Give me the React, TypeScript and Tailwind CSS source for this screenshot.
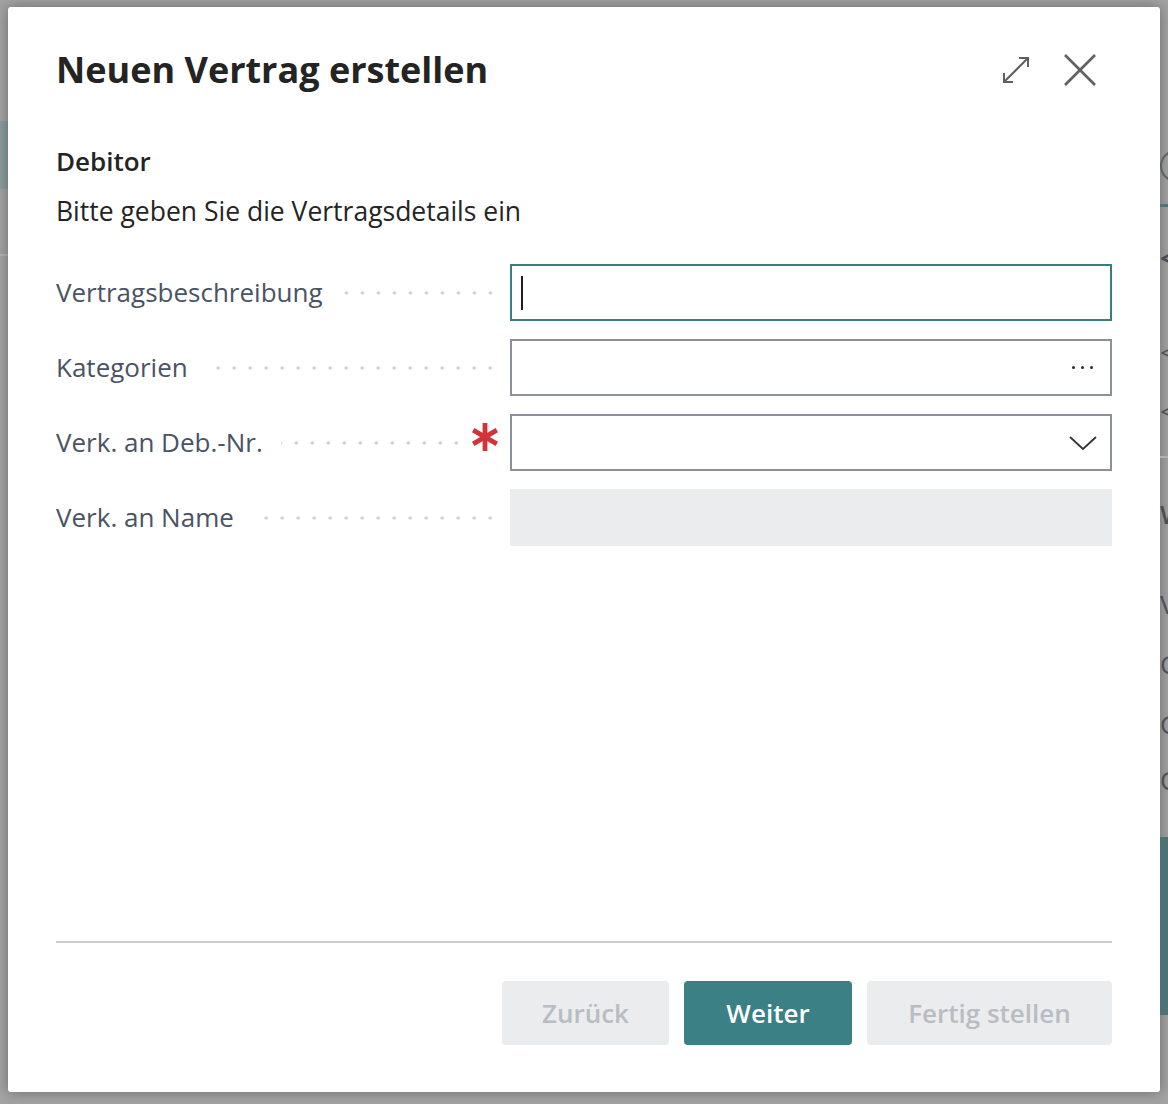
import React from "react";

// Dimmed page strip visible left of the dialog
const LeftStrip = () => (
  <div className="w-[8px] shrink-0 flex flex-col">
    <div className="h-[121px]" />
    <div className="h-[68px] bg-[#8a9d9d]" />
    <div className="h-[65px]" />
    <div className="h-[2px] bg-[#b4b4b4]" />
  </div>
);

// Dimmed page strip visible right of the dialog
const RightStrip = () => (
  <div className="w-[8px] shrink-0 flex flex-col overflow-hidden text-[#4b4f55] text-[26px] leading-none font-['Open_Sans',sans-serif]">
    <div className="h-[150px]" />
    <div className="h-[32px] w-[32px] rounded-full border-2 border-[#5b5f66]" />
    <div className="h-[22px]" />
    <div className="h-[3px] bg-[#4e7476]" />
    <div className="h-[38px]" />
    <div className="h-[26px] font-bold">&lt;</div>
    <div className="h-[68px]" />
    <div className="h-[26px]">&lt;</div>
    <div className="h-[33px]" />
    <div className="h-[26px]">&lt;</div>
    <div className="h-[32px]" />
    <div className="h-[2px] bg-[#b0b0b0]" />
    <div className="h-[43px]" />
    <div className="h-[26px] font-semibold">W</div>
    <div className="h-[64px]" />
    <div className="h-[26px]">V</div>
    <div className="h-[34px]" />
    <div className="h-[26px]">G</div>
    <div className="h-[34px]" />
    <div className="h-[26px]">G</div>
    <div className="h-[30px]" />
    <div className="h-[26px]">C</div>
    <div className="h-[44px]" />
    <div className="h-[178px] bg-[#4d7275]" />
  </div>
);

const ExpandIcon = () => (
  <svg width="30" height="30" viewBox="0 0 30 30" fill="none" stroke="#5f5f5f" strokeWidth="2">
    <path d="M3 27 L27 3" />
    <path d="M18 3 H27 V12" />
    <path d="M3 18 V27 H12" />
  </svg>
);

const CloseIcon = () => (
  <svg width="34" height="34" viewBox="0 0 34 34" fill="none" stroke="#616161" strokeWidth="2.6">
    <path d="M2 2 L32 32" />
    <path d="M32 2 L2 32" />
  </svg>
);

const Asterisk = () => (
  <svg width="28" height="30" viewBox="0 0 28 30" fill="none" stroke="#d13438" strokeWidth="4.8">
    <path d="M14 1 V29" />
    <path d="M2.2 8.2 L25.8 21.8" />
    <path d="M25.8 8.2 L2.2 21.8" />
  </svg>
);

const Leader = () => (
  <div className="flex-1 h-[4px] ml-[18px] bg-[radial-gradient(circle,#c9cbcf_1.4px,transparent_1.8px)] bg-[length:16px_4px] bg-repeat-x bg-[position:calc(100%+3px)_center]" />
);

interface FieldRowProps {
  label: string;
  required?: boolean;
  children: React.ReactNode;
}

const FieldRow = ({ label, required, children }: FieldRowProps) => (
  <div className="grid grid-cols-[439px_1fr] gap-[15px] h-[57px]">
    <div className="flex items-center">
      <span className="text-[26px] text-[#4a5363] whitespace-nowrap">{label}</span>
      <Leader />
      {required && (
        <div className="self-start mt-[8px] ml-[10px] mr-[-4px]">
          <Asterisk />
        </div>
      )}
    </div>
    {children}
  </div>
);

export default function App() {
  return (
    <div className="w-[1168px] h-[1104px] bg-[#a3a3a3] flex overflow-hidden font-['Open_Sans',sans-serif]">
      <LeftStrip />
      <div className="pt-[7px]">
        <div className="w-[1152px] h-[1085px] bg-white rounded-[3px] shadow-[0_0_14px_rgba(0,0,0,0.35)] flex flex-col pl-[48px] pr-[48px]">
          {/* Header */}
          <div className="flex items-center justify-between h-[60px] mt-[33px]">
            <h1 className="text-[36px] font-bold text-[#242424] leading-none">Neuen Vertrag erstellen</h1>
            <div className="flex items-center gap-[32px] mr-[15px]">
              <ExpandIcon />
              <CloseIcon />
            </div>
          </div>

          {/* Section */}
          <div className="mt-[45px] text-[26px] font-semibold text-[#242424] leading-[32px]">Debitor</div>
          <div className="mt-[18px] text-[26.5px] text-[#242424] leading-[32px]">Bitte geben Sie die Vertragsdetails ein</div>

          {/* Fields */}
          <div className="mt-[37px] flex flex-col gap-[18px]">
            <FieldRow label="Vertragsbeschreibung">
              <div className="border-2 border-[#3a7f80] flex items-center pl-[9px]">
                <div className="w-[2px] h-[34px] bg-[#1f1f1f]" />
              </div>
            </FieldRow>
            <FieldRow label="Kategorien">
              <div className="border-2 border-[#8b909a] flex items-center justify-end pr-[17px]">
                <div className="flex gap-[6px]">
                  <div className="w-[3px] h-[3px] rounded-full bg-[#2b2b2b]" />
                  <div className="w-[3px] h-[3px] rounded-full bg-[#2b2b2b]" />
                  <div className="w-[3px] h-[3px] rounded-full bg-[#2b2b2b]" />
                </div>
              </div>
            </FieldRow>
            <FieldRow label="Verk. an Deb.-Nr." required>
              <div className="border-2 border-[#8b909a] flex items-center justify-end pr-[13px]">
                <svg width="28" height="16" viewBox="0 0 28 16" fill="none" stroke="#333333" strokeWidth="1.8">
                  <path d="M1 2 L14 14 L27 2" />
                </svg>
              </div>
            </FieldRow>
            <FieldRow label="Verk. an Name">
              <div className="bg-[#ebecee]" />
            </FieldRow>
          </div>

          <div className="flex-1" />

          {/* Footer */}
          <div className="h-[2px] bg-[#cbcbcb]" />
          <div className="flex justify-end gap-[15px] mt-[38px] mb-[47px]">
            <button className="w-[167px] h-[64px] rounded-[4px] bg-[#ebecee] text-[#b9bcc3] text-[26px] font-semibold">Zurück</button>
            <button className="w-[168px] h-[64px] rounded-[4px] bg-[#3a8084] text-white text-[26px] font-semibold">Weiter</button>
            <button className="w-[245px] h-[64px] rounded-[4px] bg-[#ebecee] text-[#b9bcc3] text-[26px] font-semibold">Fertig stellen</button>
          </div>
        </div>
      </div>
      <RightStrip />
    </div>
  );
}
